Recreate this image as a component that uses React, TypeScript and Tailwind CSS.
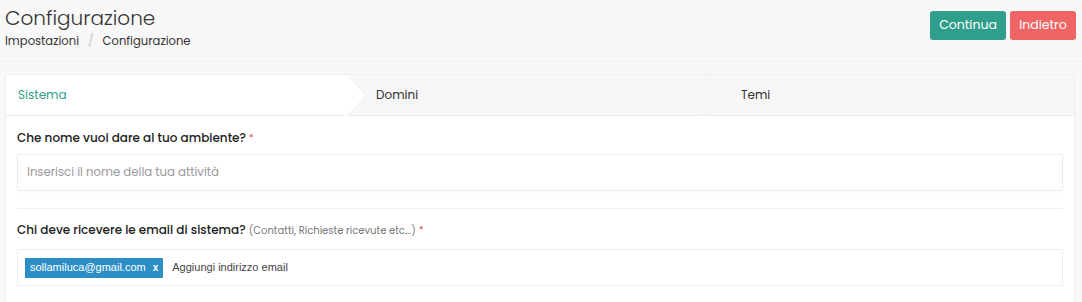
import React, { useState } from 'react'

const tabs = ["Sistema", "Domini", "Temi"]

const Chevron: React.FC<{ active: boolean }> = ({ active }) => (
    <svg className="absolute top-0 right-[-15px] z-10" width="22" height="41" viewBox="0 0 22 41">
        <polygon points="0,0 4,0 22,20.5 4,41 0,41" fill={active ? "#ffffff" : "#f7f7f7"} />
        <polyline points="4,0 22,20.5 4,41" fill="none" stroke={active ? "#ececec" : "#f1f1f1"} strokeWidth="1" />
    </svg>
)

const App: React.FC = () => {
    const [emails, setEmails] = useState<string[]>(["sollamiluca@gmail.com"])

    return (
        <div className="w-[1082px] h-[302px] overflow-hidden bg-[#f8f8f8] text-[#333] font-['Poppins','Inter',sans-serif]">
            <div className="flex justify-between items-start h-[62px] pl-[5px] pr-[6px] border-b border-[#f1f1f1]">
                <div>
                    <div className="text-[20px] font-light leading-[26px] mt-[5px] text-[#343434]">Configurazione</div>
                    <div className="flex items-center text-[11.6px] leading-4 mt-[2px] text-[#333]">
                        <span>Impostazioni</span>
                        <span className="mx-[9px] text-[#c5c5c5]">/</span>
                        <span>Configurazione</span>
                    </div>
                </div>
                <div className="flex gap-[4px] mt-[11px]">
                    <button className="bg-[#2f9e8a] text-white text-[12.5px] rounded-[3px] w-[76px] h-[29px]">Continua</button>
                    <button className="bg-[#ef6464] text-white text-[12.5px] rounded-[3px] w-[66px] h-[29px]">Indietro</button>
                </div>
            </div>

            <div className="ml-[5px] mr-[7px] mt-[12px] h-[240px] bg-white border border-[#efefef] rounded-t-[3px]">
                <div className="flex h-[41px] border-b border-[#ececec]">
                    {tabs.map((t, i) => (
                        <div key={t} className={"relative flex-1 flex items-center text-[12px] " + (i === 0 ? "bg-white text-[#2f9e8a] pl-3" : i === 1 ? "bg-[#f7f7f7] text-[#333] pl-[25px]" : "bg-[#f7f7f7] text-[#333] pl-[32px]")}>
                            {t}
                            {i < 2 && <Chevron active={i === 0} />}
                        </div>
                    ))}
                </div>

                <div className="px-[11px] pt-[14px]">
                    <div className="text-[12px] font-medium text-[#222] leading-4">
                        Che nome vuoi dare al tuo ambiente? <span className="text-[#e05a5a] text-[9px] align-top">*</span>
                    </div>
                    <input
                        type="text"
                        placeholder="Inserisci il nome della tua attività"
                        className="mt-[8px] w-full h-[37px] border border-[#eeeeee] rounded-[2px] px-[9px] text-[11.7px] placeholder:text-[#9a9a9a] outline-none shadow-[0_1px_2px_rgba(0,0,0,0.03)]"
                    />
                    <div className="mt-[17px] border-t border-[#f0f0f0]"></div>
                    <div className="mt-[13px] text-[12px] font-medium text-[#222] leading-4">
                        Chi deve ricevere le email di sistema? <span className="text-[10px] font-normal text-[#777]">(Contatti, Richieste ricevute etc...)</span> <span className="text-[#e05a5a] text-[9px] align-top">*</span>
                    </div>
                    <div className="mt-[10px] w-full h-[37px] border border-[#eeeeee] rounded-[2px] flex items-center px-[7px] gap-[9px]">
                        {emails.map(e => (
                            <span key={e} className="bg-[#2d8ec6] text-white text-[11px] font-['Liberation_Sans',sans-serif] h-[20px] px-[5px] flex items-center gap-[7px] rounded-[1px]">
                                {e}
                                <button onClick={() => setEmails(emails.filter(x => x !== e))} className="font-bold text-[10px]">x</button>
                            </span>
                        ))}
                        <input type="text" placeholder="Aggiungi indirizzo email" className="flex-1 text-[11px] font-['Liberation_Sans',sans-serif] placeholder:text-[#444] outline-none" />
                    </div>
                </div>
            </div>
        </div>
    )
}

export default App
